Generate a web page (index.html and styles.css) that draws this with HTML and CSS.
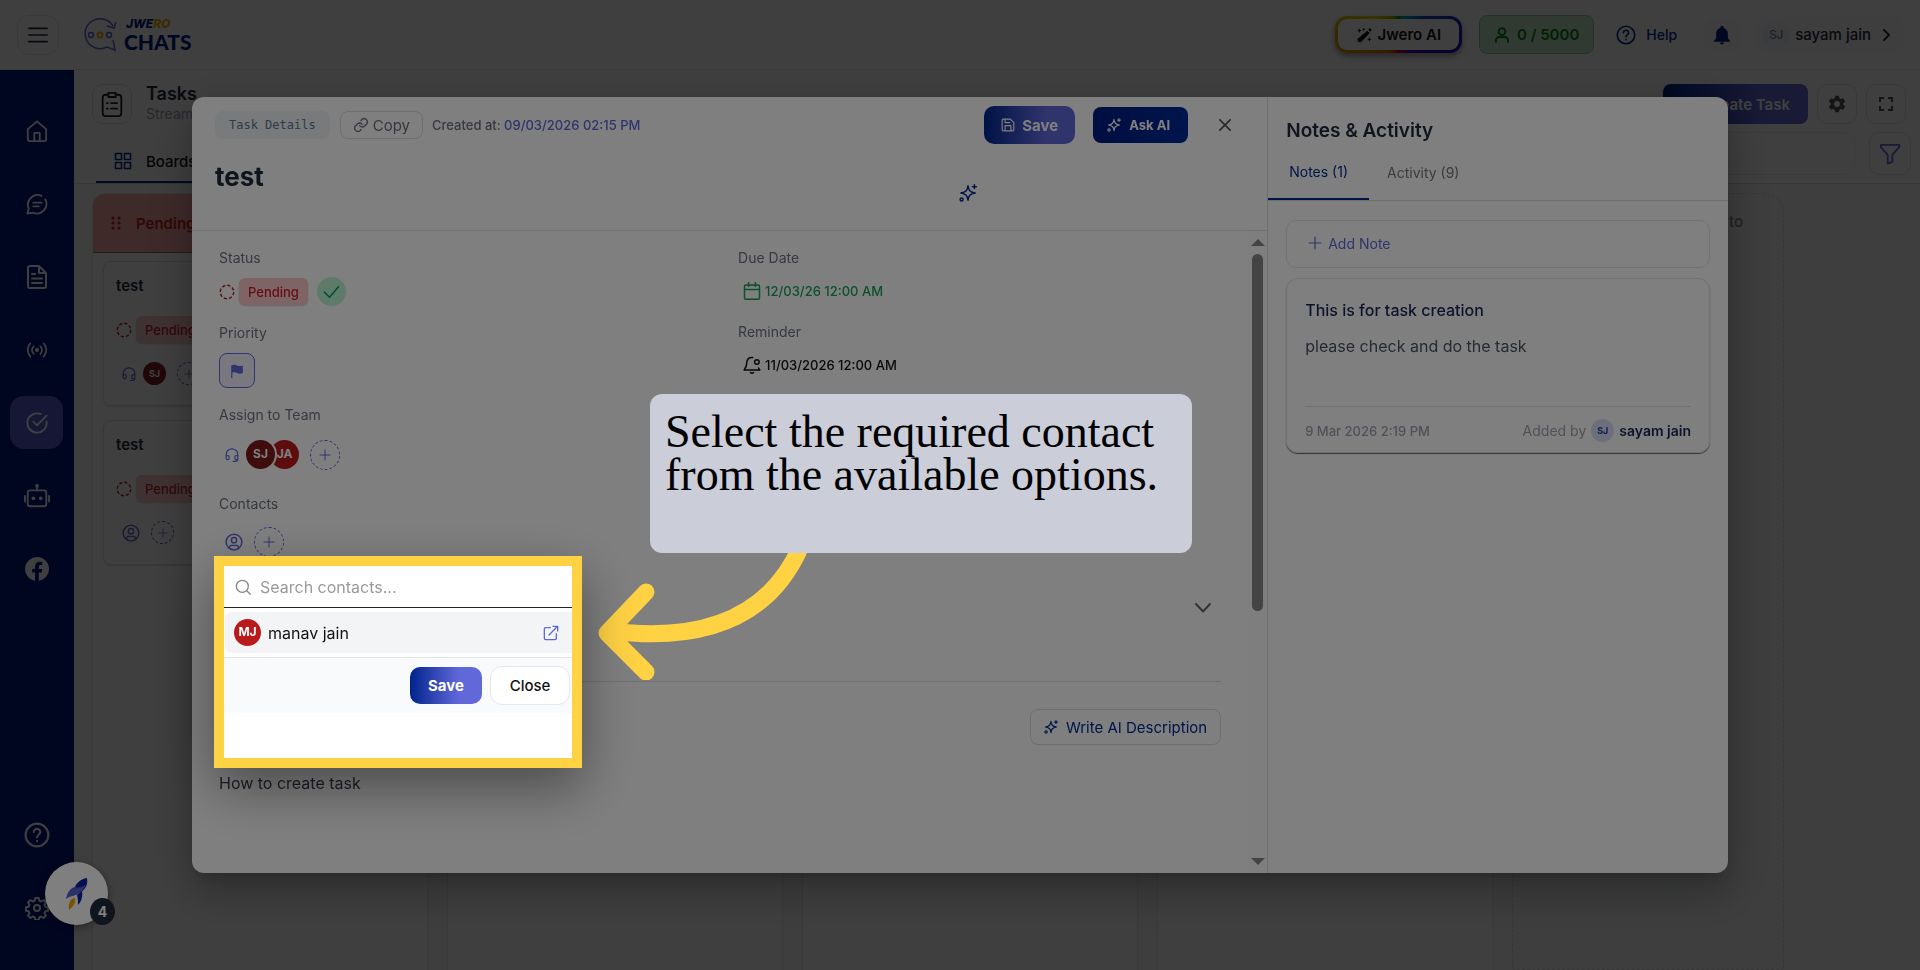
FILE: index.html
```html
<!DOCTYPE html>
<html lang="en">
<head>
    <meta charset="UTF-8">
    <meta name="viewport" content="width=device-width, initial-scale=1.0">
    <title>Tasks | Jwero Chats</title>
    <link rel="stylesheet" href="styles.css">
</head>
<body>
    <!-- Icons -->
    <svg class="icon-defs" aria-hidden="true">
        <symbol id="i-menu" viewBox="0 0 24 24"><path d="M1 4h22M1 12h22M1 20h22"/></symbol>
        <symbol id="i-home" viewBox="0 0 24 24"><path d="M2 10l10-8.500 10 8.500v11a2 2 0 0 1-2 2H4a2 2 0 0 1-2-2z"/><path d="M9 23v-9h6v9"/></symbol>
        <symbol id="i-chat" viewBox="0 0 24 24"><path d="M17 3.200A10.500 10.500 0 0 0 3 17l-1.500 5.500 6-1A10.500 10.500 0 0 0 21 7M8 10.500h9M8 14.500h6"/></symbol>
        <symbol id="i-doc" viewBox="0 0 24 24"><path d="M14 1H5a2 2 0 0 0-2 2v18a2 2 0 0 0 2 2h14a2 2 0 0 0 2-2V8zM14 1v7h7M7 9h3M7 13.500h10M7 18h10"/></symbol>
        <symbol id="i-radio" viewBox="0 0 24 24"><circle cx="12" cy="12" r="1.500" fill="currentColor"/><path d="M8 7.500a6 6 0 0 0 0 9M16 7.500a6 6 0 0 1 0 9M4 4a12 12 0 0 0 0 16M20 4a12 12 0 0 1 0 16"/></symbol>
        <symbol id="i-check-circle" viewBox="0 0 24 24"><path d="M22.500 10.500V12A10.500 10.500 0 1 1 16 2.300"/><path d="M22.500 4L12 14.500 8 10.500"/></symbol>
        <symbol id="i-bot" viewBox="0 0 28 26"><rect x="4" y="7" width="20" height="17" rx="2.500"/><path d="M14 7V3M1 13v6M27 13v6"/><circle cx="14" cy="2" r="1" fill="currentColor"/><circle cx="10" cy="15.500" r="1" fill="currentColor"/><circle cx="18" cy="15.500" r="1" fill="currentColor"/></symbol>
        <symbol id="i-facebook" viewBox="0 0 24 24"><path fill="currentColor" stroke="none" d="M24 12A12 12 0 1 0 10.100 23.900v-8.400H7.100V12h3V9.400c0-3 1.800-4.700 4.500-4.700 1.300 0 2.700.2 2.700.2v3h-1.500c-1.500 0-2 .9-2 1.900V12h3.400l-.5 3.500h-2.900v8.400A12 12 0 0 0 24 12z"/></symbol>
        <symbol id="i-help" viewBox="0 0 24 24"><circle cx="12" cy="12" r="10.500"/><path d="M9 9.200a3 3 0 0 1 6 .3c0 2-3 2.500-3 4.500"/><path d="M12 17.500v.2"/></symbol>
        <symbol id="i-gear" viewBox="0 0 24 24"><circle cx="12" cy="12" r="3"/><path d="M10.300 2h3.400l.6 2.700 1.900.8 2.400-1.500 2.400 2.400-1.500 2.400.8 1.900 2.700.6v3.400l-2.700.6-.8 1.900 1.500 2.400-2.400 2.400-2.400-1.500-1.900.8-.6 2.700h-3.400l-.6-2.700-1.900-.8-2.400 1.500L3 19.600l1.500-2.400-.8-1.900L1 14.700v-3.400l2.700-.6.8-1.900L3 6.400 5.400 4l2.400 1.500 1.900-.8z"/></symbol>
        <symbol id="i-gear-solid" viewBox="0 0 24 24"><path fill="currentColor" stroke="none" fill-rule="evenodd" d="M9.700 2h4.600l.6 3 1.700 1 2.900-1 2.300 4-2.300 2v2l2.300 2-2.300 4-2.900-1-1.700 1-.6 3H9.700l-.6-3-1.700-1-2.900 1-2.300-4 2.300-2v-2L2.200 9l2.300-4 2.900 1 1.700-1zM12 8.500a3.500 3.500 0 1 0 0 7 3.500 3.500 0 0 0 0-7z"/></symbol>
        <symbol id="i-clipboard" viewBox="0 0 24 28"><rect x="2" y="4" width="20" height="23" rx="3"/><path d="M8 2h8v4.500H8z" fill="#fff"/><path d="M6.500 13h1M11 13h6.500M6.500 19h1M11 19h6.500"/></symbol>
        <symbol id="i-grid" viewBox="0 0 24 24"><path d="M2 2h8v8H2zM14 2h8v8h-8zM2 14h8v8H2zM14 14h8v8h-8z"/></symbol>
        <symbol id="i-drag" viewBox="0 0 10 14"><g fill="currentColor" stroke="none"><circle cx="2" cy="2" r="1.600"/><circle cx="8" cy="2" r="1.600"/><circle cx="2" cy="7" r="1.600"/><circle cx="8" cy="7" r="1.600"/><circle cx="2" cy="12" r="1.600"/><circle cx="8" cy="12" r="1.600"/></g></symbol>
        <symbol id="i-dashed" viewBox="0 0 16 16"><circle cx="8" cy="8" r="6.700" stroke-width="1.400" stroke-linecap="butt" stroke-dasharray="3.300 1.960"/></symbol>
        <symbol id="i-headset" viewBox="0 0 24 24"><path d="M2 15v-4a10 9.500 0 0 1 20 0v8a4 4 0 0 1-4 4h-4M2 13h3a2 2 0 0 1 2 2v3a2 2 0 0 1-2 2H4a2 2 0 0 1-2-2zM22 13h-3a2 2 0 0 0-2 2v3a2 2 0 0 0 2 2h3"/></symbol>
        <symbol id="i-plus" viewBox="0 0 24 24"><path d="M12 2v20M2 12h20"/></symbol>
        <symbol id="i-user-circle" viewBox="0 0 24 24"><circle cx="12" cy="12" r="10.500"/><circle cx="12" cy="9.500" r="3.500"/><path d="M6 20.500v-1.500a3 3 0 0 1 3-2.500h6a3 3 0 0 1 3 2.500v1.500"/></symbol>
        <symbol id="i-user" viewBox="0 0 24 24"><circle cx="12" cy="7" r="5"/><path d="M3 22v-2a5 5 0 0 1 5-5h8a5 5 0 0 1 5 5v2"/></symbol>
        <symbol id="i-bell" viewBox="0 0 24 24"><path fill="currentColor" stroke="none" d="M12 1a2 2 0 0 0-2 2v.6C6.600 4.500 5 7.400 5 10.500V16l-2.500 3v1h19v-1L19 16v-5.500c0-3.100-1.600-6-5-6.900V3a2 2 0 0 0-2-2zM9.500 21a2.500 2.500 0 0 0 5 0z"/></symbol>
        <symbol id="i-chevron-right" viewBox="0 0 12 12"><path stroke-width="1.800" d="M3 1l5 5-5 5"/></symbol>
        <symbol id="i-chevron-down" viewBox="0 0 18 12"><path d="M2 2l7 7.500L16 2"/></symbol>
        <symbol id="i-wand" viewBox="0 0 24 24"><path fill="currentColor" stroke="none" d="M17 5.500l3.500 3.500L7.500 23 3 22l-1-4zM5 2l1 2.500L8.500 5.500 6 6.500 5 9 4 6.500 1.500 5.500 4 4.500zM20 15l1 2.500 2.500 1-2.500 1L20 22l-1-2.500-2.500-1 2.500-1zM11.500 1l.7 1.800 1.800.7-1.800.7-.7 1.800-.7-1.800-1.800-.7 1.800-.7zM20.500 1.500L23.500 4.500 21.500 7 18.500 4z"/></symbol>
        <symbol id="i-expand" viewBox="0 0 24 24"><path stroke-width="3" stroke-linecap="butt" stroke-linejoin="miter" d="M3 9V3h6M15 3h6v6M21 15v6h-6M9 21H3v-6"/></symbol>
        <symbol id="i-filter" viewBox="0 0 24 24"><path d="M2 2h20v2.500L14.500 13v7.500l-5 2V13L2 4.500z"/></symbol>
        <symbol id="i-link" viewBox="0 0 24 24"><path d="M10 13a5 5 0 0 0 7.500.5l3-3a5 5 0 0 0-7-7l-1.700 1.700M14 11a5 5 0 0 0-7.500-.5l-3 3a5 5 0 0 0 7 7l1.700-1.700"/></symbol>
        <symbol id="i-save" viewBox="0 0 24 24"><path d="M4 2h12l6 6v12a2 2 0 0 1-2 2H4a2 2 0 0 1-2-2V4a2 2 0 0 1 2-2zM7 2v6h8M7 22v-9h10v9"/></symbol>
        <symbol id="i-sparkle" viewBox="0 0 24 24"><path d="M12 2.500c.9 6 2.300 8.100 9.500 9.500-7.200 1.400-8.600 3.500-9.500 9.500-.9-6-2.300-8.100-9.500-9.500 7.200-1.400 8.600-3.500 9.500-9.500zM20.500 1v5M18 3.500h5"/><circle cx="3.500" cy="20.500" r="2"/></symbol>
        <symbol id="i-close" viewBox="0 0 14 14"><path d="M1 1l12 12M13 1L1 13"/></symbol>
        <symbol id="i-check" viewBox="0 0 24 24"><path d="M3 12l7 7L22 5"/></symbol>
        <symbol id="i-flag" viewBox="0 0 24 24"><path fill="currentColor" stroke="none" d="M2 2.500c4-2 7-1.500 10 0s6 1.500 10 0v13c-4 2-7 1.500-10 0-3-1.400-5-1.500-8-.5v9H2z"/></symbol>
        <symbol id="i-calendar" viewBox="0 0 24 24"><path d="M4 4h16a2 2 0 0 1 2 2v15a2 2 0 0 1-2 2H4a2 2 0 0 1-2-2V6a2 2 0 0 1 2-2zM2 10h20M7.500 1v5M16.500 1v5"/></symbol>
        <symbol id="i-reminder" viewBox="0 0 24 24"><path d="M13 2c-5-.5-8 2-8 7 0 5-1 6.500-3.500 9.500h21c-.8-1-1.300-1.600-1.800-2.500M10 22a3 3 0 0 0 4 0"/><circle cx="18.500" cy="8" r="3"/></symbol>
        <symbol id="i-search" viewBox="0 0 24 24"><circle cx="11" cy="11" r="9"/><path d="M18 18l5 5"/></symbol>
        <symbol id="i-external" viewBox="0 0 24 24"><path d="M20 13v7a2 2 0 0 1-2 2H4a2 2 0 0 1-2-2V6a2 2 0 0 1 2-2h7M15 2h7v7M22 2L9 15"/></symbol>
    </svg>

    <header class="app-header">
        <button type="button" class="menu-btn" aria-label="Menu"><svg class="icon s20"><use href="#i-menu"/></svg></button>
        <a href="#" class="logo">
            <svg class="logo-mark" viewBox="0 0 34 34">
                <g fill="none" stroke="#6366d9" stroke-width="1.500">
                    <path d="M29 8A15 15 0 1 0 23 29l8 3-2-10"/>
                    <path d="M23 8l7 2 2-6"/>
                    <circle cx="7" cy="17" r="2.500"/><circle cx="25" cy="17" r="2.500"/>
                </g>
                <circle cx="16" cy="17" r="2.500" fill="none" stroke="#f5a800" stroke-width="2"/>
            </svg>
            <span class="logo-text">
                <span class="logo-top">JWE<em>RO</em></span>
                <span class="logo-bottom">CHATS</span>
            </span>
        </a>
        <div class="header-actions">
            <button type="button" class="ai-btn"><svg class="icon s16"><use href="#i-wand"/></svg>Jwero AI</button>
            <div class="quota"><svg class="icon bold s16"><use href="#i-user"/></svg>0 / 5000</div>
            <a href="#" class="help-link"><svg class="icon s20"><use href="#i-help"/></svg>Help</a>
            <button type="button" class="bell-btn" aria-label="Notifications"><svg class="icon s20"><use href="#i-bell"/></svg></button>
            <button type="button" class="user-btn"><span class="user-initials">SJ</span>sayam jain<svg class="icon s12"><use href="#i-chevron-right"/></svg></button>
        </div>
    </header>

    <div class="app-body">
        <nav class="sidebar">
            <a href="#" class="nav-item" aria-label="Home"><svg class="icon s22"><use href="#i-home"/></svg></a>
            <a href="#" class="nav-item" aria-label="Chats"><svg class="icon s22"><use href="#i-chat"/></svg></a>
            <a href="#" class="nav-item" aria-label="Documents"><svg class="icon s24"><use href="#i-doc"/></svg></a>
            <a href="#" class="nav-item" aria-label="Broadcast"><svg class="icon s20"><use href="#i-radio"/></svg></a>
            <a href="#" class="nav-item active" aria-label="Tasks"><svg class="icon s22"><use href="#i-check-circle"/></svg></a>
            <a href="#" class="nav-item" aria-label="Bots"><svg class="icon s26"><use href="#i-bot"/></svg></a>
            <a href="#" class="nav-item" aria-label="Facebook"><svg class="icon s24"><use href="#i-facebook"/></svg></a>
            <a href="#" class="nav-item nav-bottom" aria-label="Help"><svg class="icon s26"><use href="#i-help"/></svg></a>
            <a href="#" class="nav-item" aria-label="Settings"><svg class="icon s24"><use href="#i-gear"/></svg></a>
        </nav>

        <main class="page">
            <div class="page-head">
                <div class="page-icon"><svg class="icon s26"><use href="#i-clipboard"/></svg></div>
                <div class="page-title">
                    <h1>Tasks</h1>
                    <p>Streamline your work</p>
                </div>
                <button type="button" class="btn-gradient create-btn">Create Task</button>
                <button type="button" class="square-btn" aria-label="Settings"><svg class="icon s20"><use href="#i-gear-solid"/></svg></button>
                <button type="button" class="square-btn" aria-label="Full screen"><svg class="icon s16"><use href="#i-expand"/></svg></button>
            </div>
            <div class="board-tabs">
                <a href="#" class="board-tab"><svg class="icon s18"><use href="#i-grid"/></svg>Boards</a>
                <input type="search" class="board-search" aria-label="Search tasks">
                <button type="button" class="square-btn filter-btn" aria-label="Filter"><svg class="icon s22"><use href="#i-filter"/></svg></button>
            </div>
            <div class="board">
                <section class="column">
                    <h2 class="column-head"><svg class="icon s14"><use href="#i-drag"/></svg>Pending</h2>
                    <article class="card">
                        <h3>test</h3>
                        <div class="status"><svg class="icon s16"><use href="#i-dashed"/></svg><span class="pill">Pending</span></div>
                        <div class="people">
                            <svg class="icon s14"><use href="#i-headset"/></svg>
                            <span class="avatar small dark">SJ</span>
                            <button type="button" class="add-round small" aria-label="Add member"><svg class="icon s10"><use href="#i-plus"/></svg></button>
                        </div>
                    </article>
                    <article class="card">
                        <h3>test</h3>
                        <div class="status"><svg class="icon s16"><use href="#i-dashed"/></svg><span class="pill">Pending</span></div>
                        <div class="people">
                            <svg class="icon s18"><use href="#i-user-circle"/></svg>
                            <button type="button" class="add-round small" aria-label="Add contact"><svg class="icon s10"><use href="#i-plus"/></svg></button>
                        </div>
                    </article>
                </section>
                <section class="column"></section>
                <section class="column"></section>
                <section class="column"></section>
                <section class="column new-column">Click here to</section>
            </div>
        </main>
    </div>

    <!-- Task dialog -->
    <div class="backdrop">
        <div class="modal" role="dialog" aria-label="Task Details">
            <div class="task">
                <div class="task-head">
                    <div class="task-bar">
                        <span class="chip">Task Details</span>
                        <button type="button" class="copy-btn"><svg class="icon s16"><use href="#i-link"/></svg>Copy</button>
                        <span class="created">Created at: <b>09/03/2026 02:15 PM</b></span>
                        <button type="button" class="btn-gradient save-task"><svg class="icon s14"><use href="#i-save"/></svg>Save</button>
                        <button type="button" class="ask-btn"><svg class="icon s14"><use href="#i-sparkle"/></svg>Ask AI</button>
                        <button type="button" class="close-btn" aria-label="Close"><svg class="icon s12"><use href="#i-close"/></svg></button>
                    </div>
                    <div class="title-row">
                        <input type="text" class="title-input" value="test" aria-label="Task title">
                        <button type="button" class="title-ai" aria-label="Rewrite title"><svg class="icon s18"><use href="#i-sparkle"/></svg></button>
                    </div>
                </div>
                <div class="task-scroll">
                    <div class="task-body">
                        <div class="fields">
                            <div class="field-col">
                                <div class="label">Status</div>
                                <div class="value status"><svg class="icon s16"><use href="#i-dashed"/></svg><span class="pill">Pending</span><button type="button" class="done-btn" aria-label="Mark as done"><svg class="icon s18"><use href="#i-check"/></svg></button></div>
                                <div class="label">Priority</div>
                                <div class="value priority"><button type="button" class="flag-btn" aria-label="Priority"><svg class="icon s14"><use href="#i-flag"/></svg></button></div>
                                <div class="label">Assign to Team</div>
                                <div class="value people team">
                                    <svg class="icon s14"><use href="#i-headset"/></svg>
                                    <span class="avatars"><span class="avatar dark">SJ</span><span class="avatar under">JA</span></span>
                                    <button type="button" class="add-round" aria-label="Add member"><svg class="icon s12"><use href="#i-plus"/></svg></button>
                                </div>
                                <div class="label">Contacts</div>
                                <div class="value people contacts">
                                    <svg class="icon s18"><use href="#i-user-circle"/></svg>
                                    <button type="button" class="add-round" aria-label="Add contact"><svg class="icon s12"><use href="#i-plus"/></svg></button>
                                </div>
                            </div>
                            <div class="field-col">
                                <div class="label">Due Date</div>
                                <div class="value date due"><svg class="icon s18"><use href="#i-calendar"/></svg>12/03/26 12:00 AM</div>
                                <div class="label">Reminder</div>
                                <div class="value date"><svg class="icon s18"><use href="#i-reminder"/></svg>11/03/2026 12:00 AM</div>
                            </div>
                        </div>
                        <div class="accordion">
                            <button type="button" class="expand-btn" aria-label="Expand"><svg class="icon s18"><use href="#i-chevron-down"/></svg></button>
                        </div>
                        <div class="desc-head">
                            <button type="button" class="write-btn"><svg class="icon s14"><use href="#i-sparkle"/></svg>Write AI Description</button>
                        </div>
                        <p class="desc">How to create task</p>
                    </div>
                    <div class="scrollbar">
                        <span class="arrow-up"></span>
                        <span class="thumb"></span>
                        <span class="arrow-down"></span>
                    </div>
                </div>
            </div>

            <aside class="notes">
                <h2>Notes &amp; Activity</h2>
                <div class="note-tabs">
                    <button type="button" class="note-tab active">Notes (1)</button>
                    <button type="button" class="note-tab">Activity (9)</button>
                </div>
                <div class="notes-body">
                    <button type="button" class="add-note"><svg class="icon s14"><use href="#i-plus"/></svg>Add Note</button>
                    <article class="note">
                        <h3>This is for task creation</h3>
                        <p>please check and do the task</p>
                        <footer>
                            <span class="note-date">9 Mar 2026 2:19 PM</span>
                            <span class="note-by">Added by <span class="mini-avatar">SJ</span><b>sayam jain</b></span>
                        </footer>
                    </article>
                </div>
            </aside>
        </div>
    </div>

    <button type="button" class="launcher" aria-label="Getting started">
        <svg width="24" height="34" viewBox="0 0 24 34">
            <path fill="#0a1fa8" d="M22 1C15 2 10 7 9 13l6 3c6-4 8-9 7-15z"/>
            <path fill="#5b60cc" d="M10 10C5 11 2 16 1 22c4-3 7-3 10-4 5-2 8-6 10-11-4 4-7 4-11 3z"/>
            <path fill="#0a1fa8" d="M12 18l5-4c1 6-1 11-4 14 0-4 0-7-1-10z"/>
            <path fill="#f5a800" d="M10 21c-5 0-7 6-6 12 4-3 7-7 6-12z"/>
        </svg>
        <span class="badge">4</span>
    </button>

    <!-- Guided tour step -->
    <div class="tour">
        <svg class="tour-arrow" width="220" height="140" viewBox="0 0 220 140">
            <path d="M56 52L17 93l39 39M20 91C100 101 175 86 210 8"/>
        </svg>
        <div class="tour-note">Select the required contact from the available options.</div>
        <div class="spotlight">
            <label class="contact-search">
                <svg class="icon s16"><use href="#i-search"/></svg>
                <input type="text" placeholder="Search contacts..." aria-label="Search contacts">
            </label>
            <div class="contact">
                <span class="avatar">MJ</span>
                <span class="contact-name">manav jain</span>
                <a href="#" aria-label="Open contact"><svg class="icon s16"><use href="#i-external"/></svg></a>
            </div>
            <div class="contact-actions">
                <button type="button" class="btn-gradient">Save</button>
                <button type="button" class="btn-plain">Close</button>
            </div>
        </div>
    </div>
</body>
</html>
```
FILE: styles.css
```css
* {
    box-sizing: border-box;
}
body {
    margin: 0;
    height: 100vh;
    overflow: hidden;
    display: flex;
    flex-direction: column;
    font-family: Inter, sans-serif;
    font-size: 14px;
    color: #1e293b;
    background: #fff;
}
h1, h2, h3, p {
    margin: 0;
}
a {
    color: inherit;
    text-decoration: none;
}
button, input {
    font-family: inherit;
    font-size: 14px;
    color: inherit;
    margin: 0;
}
button {
    display: flex;
    align-items: center;
    justify-content: center;
    padding: 0;
    border: none;
    background: none;
    cursor: pointer;
}

/* icons */
.icon-defs {
    position: absolute;
    width: 0;
    height: 0;
}
.icon {
    flex: none;
    fill: none;
    stroke: currentColor;
    stroke-width: 2;
    stroke-linecap: round;
    stroke-linejoin: round;
}
.bold { stroke-width: 3; }
.s10 { width: 10px; height: 10px; }
.s12 { width: 12px; height: 12px; }
.s14 { width: 14px; height: 14px; }
.s16 { width: 16px; height: 16px; }
.s18 { width: 18px; height: 18px; }
.s20 { width: 20px; height: 20px; }
.s22 { width: 22px; height: 22px; }
.s24 { width: 24px; height: 24px; }
.s26 { width: 26px; height: 26px; }

/* header */
.app-header {
    flex: none;
    height: 70px;
    display: flex;
    align-items: center;
    padding: 0 17px;
    border-bottom: 1px solid #eee;
}
.menu-btn {
    width: 42px;
    height: 40px;
    border: 1px solid #e5e5e5;
    border-radius: 12px;
}
.logo {
    display: flex;
    align-items: center;
    gap: 6px;
    margin-left: 25px;
}
.logo-mark {
    width: 34px;
    height: 34px;
}
.logo-text {
    display: flex;
    flex-direction: column;
    color: #001d85;
}
.logo-top {
    padding-left: 2px;
    font-size: 12px;
    line-height: 14px;
    font-weight: 800;
    font-style: italic;
}
.logo-top em {
    color: #f5a800;
}
.logo-bottom {
    font-family: Lato, sans-serif;
    font-size: 21px;
    line-height: 21px;
    font-weight: 900;
}
.header-actions {
    margin-left: auto;
    display: flex;
    align-items: center;
    gap: 17px;
    font-size: 15px;
    font-weight: 500;
}
.header-actions button {
    font-size: 15px;
    font-weight: 500;
}
.header-actions .ai-btn {
    height: 37px;
    padding: 0 18px;
    gap: 6px;
    font-weight: 600;
    color: #111;
    border: 3px solid transparent;
    border-radius: 12px;
    background:
        linear-gradient(#fff, #fff) padding-box,
        conic-gradient(#169016, #00a8c0 20deg, #1540c0 60deg, #1010b0 100deg, #4800a0 150deg, #c00000 180deg, #d07000 210deg, #d8a000 270deg, #e0d000 300deg, #a0b000 340deg, #169016) border-box;
    box-shadow: 0 3px 6px #0006;
}
.quota {
    height: 39px;
    display: flex;
    align-items: center;
    gap: 7px;
    padding: 0 14px;
    color: #0a7d1c;
    font-weight: 600;
    background: #c5e8c9;
    border: 1px solid #8fc797;
    border-radius: 8px;
}
.help-link {
    display: flex;
    align-items: center;
    gap: 10px;
    margin: 0 10px 0 5px;
    font-size: 14px;
    color: #012a8f;
}
.bell-btn {
    width: 36px;
    height: 34px;
    color: #001d85;
    background: #f8f8f8;
    border-radius: 10px;
}
.user-btn {
    height: 36px;
    gap: 6px;
    padding: 0 10px 0 6px;
    background: #fafafa;
    border-radius: 10px;
}
.user-btn .icon {
    margin-left: 4px;
}
.user-initials {
    width: 26px;
    height: 26px;
    line-height: 26px;
    border-radius: 50%;
    font-size: 12px;
    font-weight: 400;
    color: #64748b;
    background: #eef0f8;
}

/* sidebar */
.app-body {
    flex: 1;
    min-height: 0;
    display: flex;
}
.sidebar {
    flex: none;
    width: 74px;
    display: flex;
    flex-direction: column;
    align-items: center;
    gap: 20px;
    padding: 34px 1px 36px 0;
    background: #001480;
    color: #fff;
}
.nav-item {
    width: 53px;
    height: 53px;
    display: flex;
    align-items: center;
    justify-content: center;
    border-radius: 14px;
}
.nav-item.active {
    background: #5b5fd0;
}
.nav-bottom {
    margin-top: auto;
}

/* tasks page */
.page {
    flex: 1;
    min-width: 0;
    display: flex;
    flex-direction: column;
}
.page-head {
    display: flex;
    align-items: center;
    gap: 9px;
    padding: 14px 14px 0 18px;
}
.page-icon {
    width: 40px;
    height: 40px;
    display: flex;
    align-items: center;
    justify-content: center;
    border: 1px solid #e2e2e2;
    border-radius: 10px;
    color: #222;
}
.page-title {
    flex: 1;
    padding-left: 5px;
}
.page-title h1 {
    font-size: 18px;
    line-height: 20px;
    font-weight: 600;
}
.page-title p {
    line-height: 20px;
    color: #94a3b8;
}
.btn-gradient {
    color: #fff;
    font-size: 15px;
    font-weight: 700;
    border-radius: 10px;
    background: linear-gradient(90deg, #00248c, #6168da 68%);
}
.create-btn {
    width: 145px;
    height: 40px;
    justify-content: flex-end;
    padding-right: 18px;
    font-weight: 600;
    border-radius: 8px;
}
.square-btn {
    width: 40px;
    height: 40px;
    border: 1px solid #e2e2e2;
    border-radius: 10px;
    color: #555;
}
.board-tabs {
    display: flex;
    align-items: center;
    gap: 14px;
    height: 60px;
    padding: 0 9px 0 22px;
    border-bottom: 1px solid #d8dce0;
}
.board-tab {
    align-self: flex-end;
    width: 130px;
    height: 42px;
    display: flex;
    align-items: center;
    gap: 14px;
    padding-left: 18px;
    font-size: 15px;
    font-weight: 500;
    color: #0f172a;
    border-bottom: 2px solid #012a8f;
}
.board-tab .icon {
    color: #012a8f;
}
.board-search {
    margin-left: auto;
    width: 300px;
    height: 43px;
    background: none;
    border: 1px solid #eee;
    border-radius: 10px;
}
.filter-btn {
    width: 42px;
    height: 43px;
    color: #6168da;
}
.board {
    flex: 1;
    min-height: 0;
    display: flex;
    gap: 19px;
    padding: 9px 18px 0;
    background: #f8f9f9;
}
.column {
    flex: none;
    width: 336px;
    background: #fff;
    border: 1px solid #e6e8ea;
    border-bottom: none;
    border-radius: 12px 12px 0 0;
}
.column-head {
    display: flex;
    align-items: center;
    gap: 13px;
    height: 59px;
    padding-left: 16px;
    font-size: 15px;
    font-weight: 600;
    color: #c81e1e;
    background: #fca8a8;
    border-bottom: 1px solid #777;
    border-radius: 12px 12px 0 0;
}
.new-column {
    width: 272px;
    padding: 18px 40px 0 0;
    text-align: right;
    font-size: 15px;
    font-weight: 500;
    line-height: 20px;
    color: #888;
    background: none;
    border: 1px dashed #ddd;
    border-radius: 20px 20px 0 0;
}
.card {
    margin: 8px 10px 14px;
    padding: 14px 12px 20px;
    border: 1px solid #dcdee0;
    border-radius: 8px;
    box-shadow: 0 1px 2px #0002;
}
.card h3 {
    margin-bottom: 20px;
    font-size: 15px;
    line-height: 20px;
    font-weight: 600;
}
.card .people {
    margin-top: 19px;
}

/* shared bits */
.status {
    display: flex;
    align-items: center;
    gap: 4px;
    color: #b91c1c;
}
.pill {
    height: 27px;
    padding: 0 9px;
    line-height: 28px;
    font-size: 13px;
    font-weight: 500;
    color: #c81e2c;
    background: #fdc8c8;
    border-radius: 6px;
    box-shadow: 0 1px 2px #0003;
}
.people {
    display: flex;
    align-items: center;
    gap: 7px;
    padding-left: 6px;
    color: #6168da;
}
.avatar {
    flex: none;
    width: 29px;
    height: 29px;
    line-height: 28px;
    border-radius: 50%;
    text-align: center;
    font-size: 12px;
    font-weight: 700;
    color: #fff;
    background: #bb1a1d;
}
.avatar.dark {
    background: #7f1a1d;
}
.avatar.small {
    width: 23px;
    height: 23px;
    line-height: 23px;
    font-size: 9px;
}
.add-round {
    width: 30px;
    height: 30px;
    margin-left: 4px;
    border: 1px dashed #6168da;
    border-radius: 50%;
}
.add-round.small {
    width: 23px;
    height: 23px;
}

/* dialog */
.backdrop {
    position: fixed;
    inset: 0;
    z-index: 10;
    display: flex;
    align-items: center;
    justify-content: center;
    background: rgba(0, 0, 0, 0.5);
}
.modal {
    width: 80vw;
    height: 80vh;
    display: flex;
    overflow: hidden;
    background: #fff;
    border-radius: 12px;
    box-shadow: 0 11px 15px -7px #0003, 0 24px 38px 3px #0002, 0 9px 46px 8px #0002;
}
.task {
    flex: 1;
    min-width: 0;
    display: flex;
    flex-direction: column;
}
.task-head {
    height: 134px;
    padding: 9px 36px 0 23px;
    border-bottom: 1px solid #e2e2e2;
}
.task-bar {
    display: flex;
    align-items: center;
}
.chip {
    height: 28px;
    padding: 0 14px;
    line-height: 28px;
    font-family: "DejaVu Sans Mono", monospace;
    font-size: 12px;
    color: #64748b;
    background: #f1f5f9;
    border-radius: 8px;
}
.copy-btn {
    height: 28px;
    margin: 0 9px 0 10px;
    padding: 0 12px;
    gap: 4px;
    font-size: 15px;
    font-weight: 400;
    color: #6b7280;
    border: 1px solid #ddd;
    border-radius: 8px;
}
.created {
    font-size: 13px;
    font-weight: 500;
    color: #6b7280;
}
.created b {
    font-weight: 500;
    color: #6168da;
}
.save-task {
    width: 91px;
    height: 38px;
    gap: 7px;
    margin-left: auto;
}
.ask-btn {
    width: 95px;
    height: 36px;
    gap: 8px;
    margin: 0 31px 0 18px;
    padding-right: 4px;
    font-size: 13px;
    font-weight: 700;
    color: #fff;
    background: linear-gradient(90deg, #001c82, #012a9a);
    border-radius: 8px;
}
.close-btn {
    color: #555;
}
.title-row {
    display: flex;
    align-items: flex-start;
    width: 762px;
    padding-top: 15px;
}
.title-input {
    flex: 1;
    min-width: 0;
    height: 34px;
    padding: 0;
    border: none;
    background: none;
    font-size: 26px;
    font-weight: 700;
    outline: none;
}
.title-ai {
    margin-top: 25px;
    color: #012a8f;
}
.task-scroll {
    flex: 1;
    min-height: 0;
    display: flex;
}
.task-body {
    flex: 1;
    min-width: 0;
    padding: 17px 27px 0;
}
.fields {
    display: grid;
    grid-template-columns: 1fr 1fr;
    gap: 36px;
    height: 328px;
}
.label {
    line-height: 20px;
    color: #6b7280;
}
.value {
    height: 35px;
    margin: 6px 0 14px;
}
.value.priority {
    margin: 10px 0 17px;
}
.value.team {
    margin: 12px 0 22px;
}
.value.contacts {
    margin-top: 10px;
}
.done-btn {
    width: 29px;
    height: 29px;
    margin-left: 5px;
    border-radius: 50%;
    color: #059669;
    background: #bbf7d0;
}
.flag-btn {
    width: 36px;
    height: 35px;
    color: #6168da;
    background: #f0f0fc;
    border: 1px solid #6168da;
    border-radius: 8px;
}
.avatars {
    display: flex;
}
.avatars .dark {
    z-index: 1;
    box-shadow: 0 0 0 2px #fff;
}
.under {
    margin-left: -5px;
}
.date {
    display: flex;
    align-items: center;
    gap: 4px;
    height: 33px;
    margin-bottom: 15px;
    padding-left: 5px;
    font-size: 13px;
    font-weight: 500;
    color: #111;
}
.date.due {
    color: #16a35a;
}
.accordion {
    display: flex;
    align-items: center;
    justify-content: flex-end;
    height: 106px;
    padding: 0 9px 42px 0;
    border-bottom: 1px solid #ddd;
    color: #666;
}
.desc-head {
    display: flex;
    justify-content: flex-end;
    padding: 27px 0 27px;
}
.write-btn {
    height: 36px;
    padding: 0 13px;
    gap: 8px;
    font-size: 15px;
    font-weight: 400;
    color: #012a8f;
    border: 1px solid #ddd;
    border-radius: 8px;
}
.desc {
    font-size: 16px;
    line-height: 22px;
    color: #374151;
}
.scrollbar {
    flex: none;
    width: 19px;
    display: flex;
    flex-direction: column;
    align-items: center;
    padding: 8px 0;
    background: #fcfcfc;
}
.arrow-up, .arrow-down {
    border: 7px solid transparent;
}
.arrow-up {
    border-top: none;
    border-bottom-color: #888;
}
.arrow-down {
    margin-top: auto;
    border-bottom: none;
    border-top-color: #888;
}
.thumb {
    width: 11px;
    height: 57%;
    margin-top: 8px;
    border-radius: 6px;
    background: #888;
}

/* notes panel */
.notes {
    flex: none;
    width: 30%;
    border-left: 1px solid #ddd;
}
.notes h2 {
    padding: 22px 18px 0;
    font-size: 19px;
    line-height: 24px;
    font-weight: 600;
}
.note-tabs {
    display: flex;
    height: 58px;
    border-bottom: 1px solid #ddd;
}
.note-tab {
    padding: 2px 18px 0;
    font-weight: 400;
    color: #777;
}
.note-tab.active {
    padding: 2px 21px 0;
    color: #012a8f;
    border-bottom: 2px solid #012a8f;
}
.notes-body {
    padding: 15px 18px;
}
.add-note {
    width: 100%;
    height: 48px;
    margin: 4px 0 10px;
    justify-content: flex-start;
    gap: 6px;
    padding: 0 0 2px 21px;
    color: #6168da;
    border: 1px solid #e2e2e2;
    border-radius: 10px;
}
.note {
    padding: 19px 18px 10px;
    border: 1px solid #e2e2e2;
    border-radius: 12px;
    box-shadow: 0 1px 1px #0009;
}
.note h3 {
    font-size: 16px;
    line-height: 24px;
    font-weight: 500;
    color: #172554;
}
.note p {
    margin: 12px 0 48px;
    font-size: 16px;
    line-height: 24px;
    color: #4b5563;
}
.note footer {
    display: flex;
    justify-content: space-between;
    align-items: center;
    padding-top: 12px;
    border-top: 1px solid #ddd;
    color: #9ca3af;
}
.note-date {
    font-size: 13px;
    font-weight: 500;
}
.note-by {
    display: flex;
    align-items: center;
    gap: 5px;
}
.note-by b {
    font-weight: 600;
    color: #172554;
}
.mini-avatar {
    width: 23px;
    height: 23px;
    line-height: 23px;
    border-radius: 50%;
    text-align: center;
    font-size: 9px;
    font-weight: 700;
    color: #1e3a9f;
    background: #dbe0f8;
}

/* getting started button */
.launcher {
    position: fixed;
    left: 45px;
    bottom: 45px;
    z-index: 20;
    width: 63px;
    height: 63px;
    border-radius: 50%;
    background: #fff;
    box-shadow: 0 2px 8px #0006;
}
.badge {
    position: absolute;
    right: -7px;
    bottom: 0;
    width: 25px;
    height: 27px;
    line-height: 27px;
    border-radius: 50%;
    font-weight: 700;
    color: #fff;
    background: #1e293b;
}

/* tour */
.tour {
    position: fixed;
    inset: 0;
    z-index: 30;
    background: rgba(0, 0, 0, 0.5);
}
.tour-arrow {
    position: absolute;
    left: 590px;
    top: 540px;
    fill: none;
    stroke: #ffd244;
    stroke-width: 17;
    stroke-linecap: round;
    stroke-linejoin: round;
}
.tour-note {
    position: absolute;
    left: 650px;
    top: 394px;
    width: 542px;
    height: 159px;
    padding: 16px 15px;
    font-family: "Liberation Serif", serif;
    font-size: 46px;
    line-height: 43px;
    color: #000;
    background: #cbced8;
    border-radius: 12px;
}
.spotlight {
    position: absolute;
    left: 214px;
    top: 556px;
    width: 368px;
    height: 212px;
    background: #fff;
    border: 10px solid #ffd244;
    box-shadow: 0 20px 50px #0006;
}
.contact-search {
    display: flex;
    align-items: center;
    gap: 9px;
    height: 42px;
    padding: 0 11px;
    border-bottom: 1px solid #222;
    color: #888;
}
.contact-search input {
    flex: 1;
    padding: 0;
    border: none;
    outline: none;
    font-size: 16px;
}
.contact-search input::placeholder {
    color: #999;
}
.contact {
    display: flex;
    align-items: center;
    gap: 7px;
    height: 41px;
    margin: 4px 0 4px 1px;
    padding: 0 13px 0 9px;
    background: #f3f4f6;
    border-radius: 6px 0 0 6px;
}
.contact .avatar {
    width: 27px;
    height: 27px;
    line-height: 26px;
}
.contact-name {
    flex: 1;
    font-size: 16px;
    color: #111;
}
.contact a {
    color: #6168da;
    line-height: 0;
}
.contact-actions {
    display: flex;
    align-items: center;
    justify-content: flex-end;
    gap: 8px;
    height: 56px;
    padding-right: 2px;
    background: #f9fafc;
    border-top: 1px solid #e2e4e8;
}
.contact-actions .btn-gradient {
    width: 72px;
    height: 37px;
}
.btn-plain {
    width: 80px;
    height: 39px;
    font-size: 15px;
    font-weight: 500;
    color: #111;
    background: #fff;
    border: 1px solid #e5e7eb;
    border-radius: 12px;
}
```
